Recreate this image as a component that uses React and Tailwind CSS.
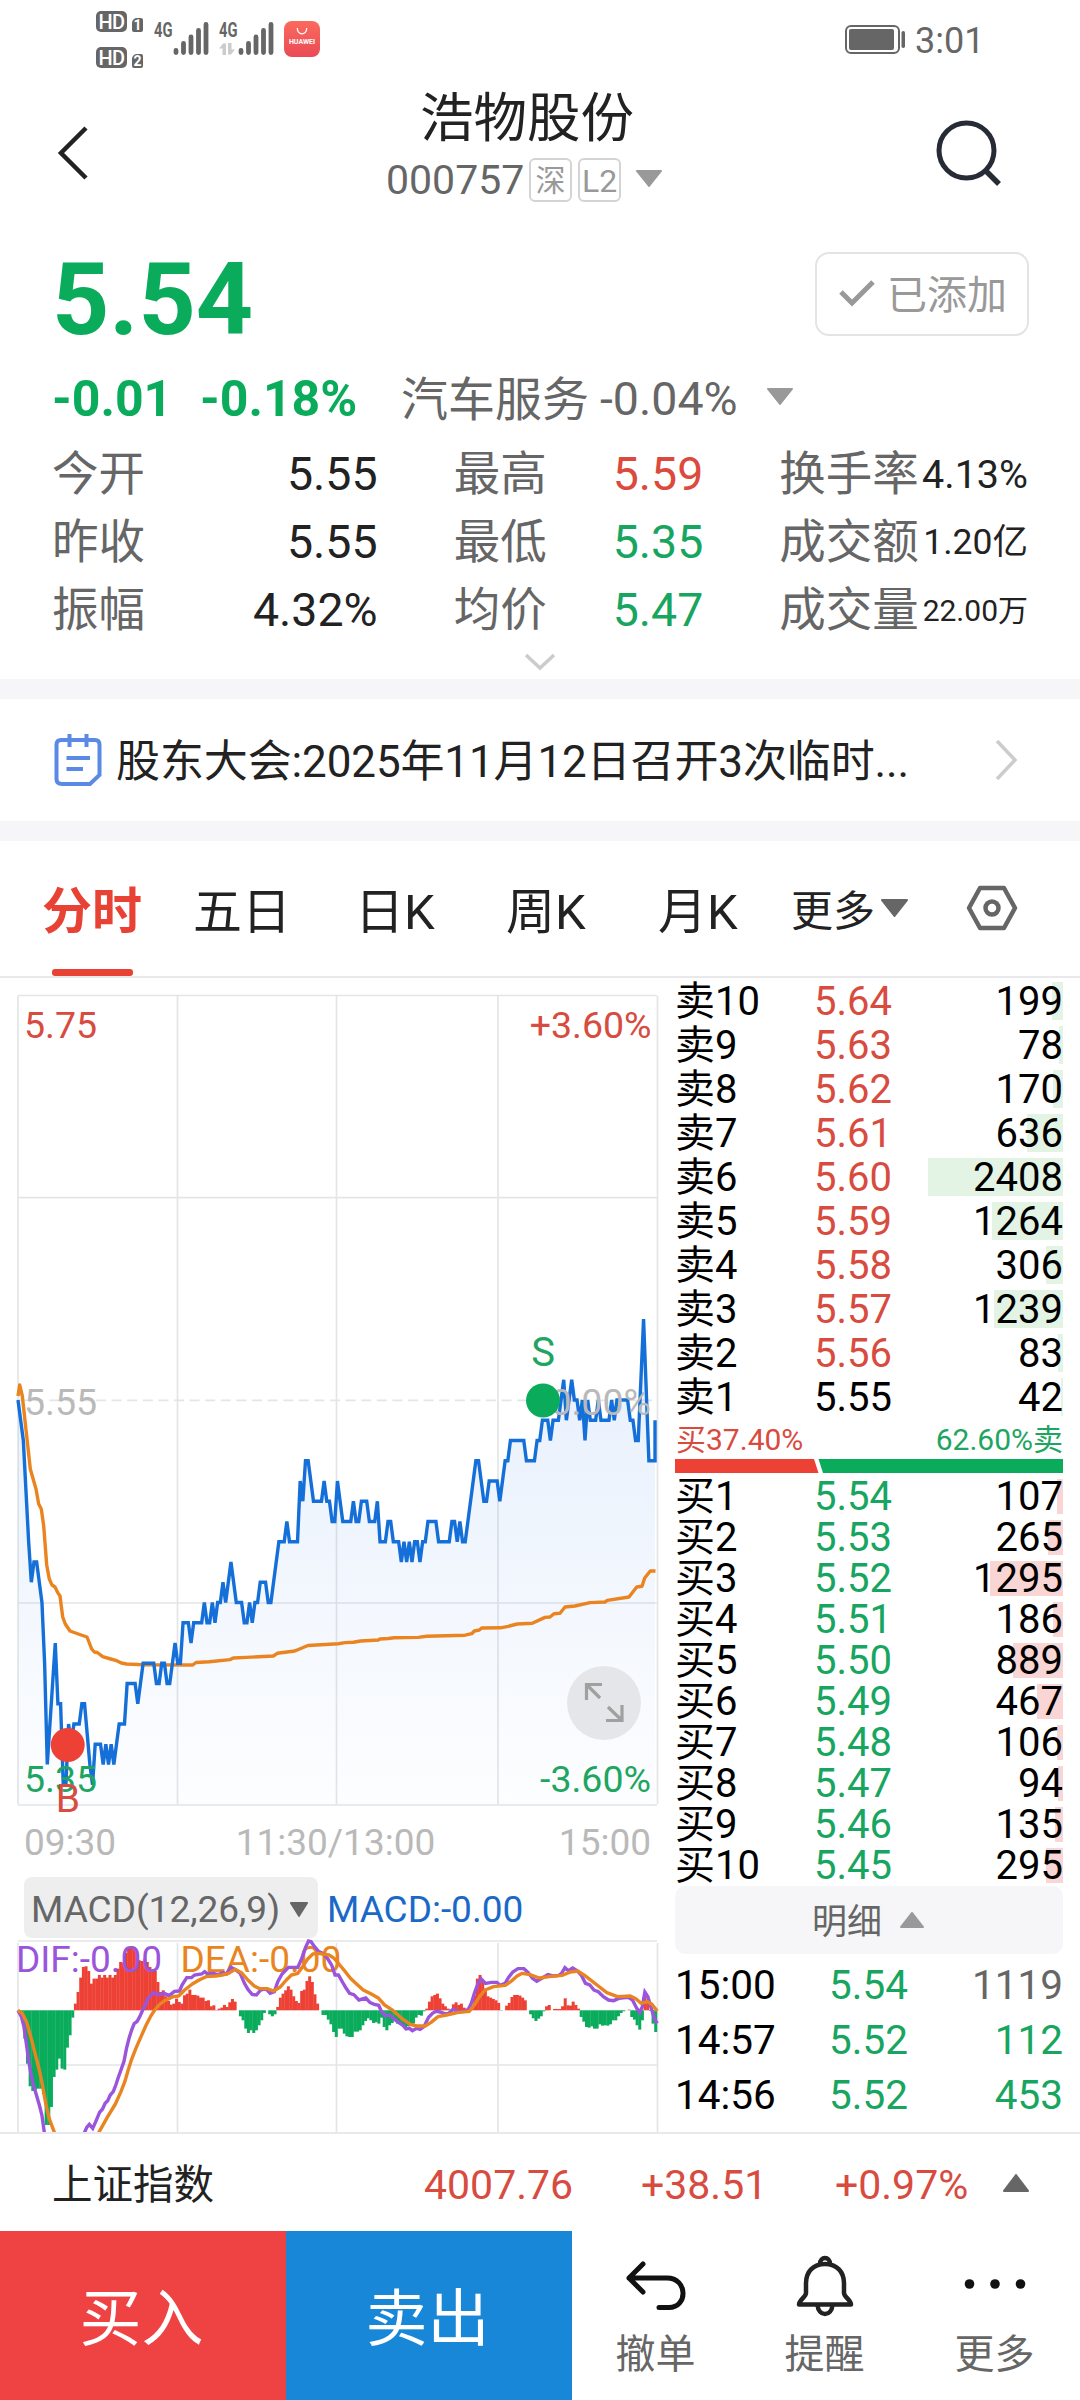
import React from 'react'

const stats = [
  [['今开', '5.55'], ['最高', '5.59', 'text-[#dc4a3d]'], ['换手率', '4.13%', 'text-[39.500px]']],
  [['昨收', '5.55'], ['最低', '5.35', 'text-[#17a55f]'], ['成交额', '1.20亿', 'text-[35.500px]']],
  [['振幅', '4.32%'], ['均价', '5.47', 'text-[#17a55f]'], ['成交量', '22.00万', 'text-[30px]']],
]

const asks = [
  ['卖10', '5.64', 199], ['卖9', '5.63', 78], ['卖8', '5.62', 170], ['卖7', '5.61', 636], ['卖6', '5.60', 2408],
  ['卖5', '5.59', 1264], ['卖4', '5.58', 306], ['卖3', '5.57', 1239], ['卖2', '5.56', 83], ['卖1', '5.55', 42],
]

const bids = [
  ['买1', '5.54', 107], ['买2', '5.53', 265], ['买3', '5.52', 1295], ['买4', '5.51', 186], ['买5', '5.50', 889],
  ['买6', '5.49', 467], ['买7', '5.48', 106], ['买8', '5.47', 94], ['买9', '5.46', 135], ['买10', '5.45', 295],
]

const ticks = [
  ['15:00', '5.54', 1119, 'text-[#666]'],
  ['14:57', '5.52', 112, 'text-[#17a55f]'],
  ['14:56', '5.52', 453, 'text-[#17a55f]'],
]

// [minute, cents below the previous close]
const prices = [
  [0, 0], [2, 2], [4, 7], [5, 9], [6, 8], [7, 8], [9, 10], [10, 13], [11, 18], [14, 12], [15, 15], [16, 15], [17, 19], [18, 19],
  [19, 16], [20, 17], [21, 16], [23, 16], [24, 15], [25, 15], [27, 18], [28, 19], [29, 17], [31, 17], [32, 18], [33, 17], [34, 18],
  [35, 17], [36, 18], [38, 16], [40, 16], [41, 14], [44, 14], [45, 15], [47, 13], [51, 13], [52, 14], [53, 14], [54, 13], [55, 13],
  [56, 14], [57, 14], [59, 12], [60, 13], [61, 13], [62, 11], [64, 11], [65, 12], [66, 11], [69, 11], [70, 10], [71, 11], [72, 11],
  [73, 10], [74, 11], [75, 10], [76, 10], [77, 9], [78, 10], [80, 8], [82, 10], [84, 10], [85, 11], [86, 11], [87, 10], [88, 11],
  [89, 10], [90, 10], [91, 9], [93, 9], [94, 10], [95, 10], [98, 7], [100, 7], [101, 6], [102, 7], [105, 7], [106, 4], [107, 5],
  [108, 3], [109, 3], [111, 5], [114, 5], [115, 4], [116, 5], [117, 5], [118, 6], [119, 6], [120, 4], [122, 6], [125, 6], [126, 5],
  [127, 6], [128, 6], [129, 5], [131, 5], [132, 6], [134, 6], [135, 5], [136, 7], [138, 7], [139, 6], [140, 6], [141, 7], [143, 7],
  [144, 8], [145, 7], [146, 8], [147, 7], [148, 8], [149, 7], [150, 7], [151, 8], [152, 7], [153, 7], [154, 6], [157, 6], [158, 7],
  [162, 7], [163, 6], [164, 6], [165, 7], [166, 6], [167, 7], [168, 7], [172, 3], [173, 3], [175, 5], [176, 5], [177, 4], [180, 4],
  [181, 5], [183, 3], [184, 3], [185, 2], [190, 2], [191, 3], [194, 3], [195, 2], [196, 2], [197, 1], [199, 1], [200, 2], [201, 1],
  [203, 1], [205, -1], [206, 1], [208, -1], [209, 0], [210, 0], [211, 1], [212, 0], [213, 2], [214, 0], [215, 1], [217, 1], [218, 0],
  [219, 1], [222, 1], [223, 0], [224, 1], [225, 0], [229, 0], [230, 1], [231, 1], [232, 2], [233, 2], [235, -4], [237, 3], [239.3, 3],
  [239.3, 1],
]

const avgLine =
  '18,1396 19.7,1385 22.3,1396 30.3,1469 36,1489 38.7,1504 41.3,1509 43.7,1526 46.7,1565 49.3,1579 52,1585 55,1587 57.7,1592.6 60,1596 62.7,1617 65.3,1624 70,1631 78.3,1634 87,1637 91.7,1649 94.3,1652 97.3,1652.5 102.7,1656.6 110.7,1659 116.7,1660.7 121.3,1663 126.7,1664 143.3,1664.8 192.7,1665 196,1662.5 209.3,1661.8 230,1659.6 233.3,1658 246.7,1657.4 273.3,1656 277.3,1653.3 294.7,1651 308,1645.5 338.3,1643.7 345,1642.6 353.3,1642.2 360.7,1641 378.3,1640 380,1639 388.3,1638.5 394,1637.8 418.3,1637.4 426.7,1636.3 465,1635.2 471.7,1633.7 474.3,1631 479.3,1630 481.7,1628 500.3,1627.8 508.3,1626.3 517.3,1624 532.3,1623.3 545,1617.4 550,1617 554,1613.7 560,1613.3 565,1607 575,1606 590,1602.6 605,1602 607.3,1600.4 629,1597 636.7,1587 642,1586.3 644.7,1578 650.3,1571 655.5,1571'

// one bar per minute, positive values hang under the zero line
const hist = [
  5, 20, 85, 160, 228, 242, 238, 235, 235, 252, 344, 344, 290, 200, 178, 145, 175, 178, 112, 75, 22,
  -20, -55, -98, -130, -132, -118, -80, -95, -95, -106, -98, -106, -98, -106, -98, -106, -125, -145, -143,
  -172, -190, -192, -190, -176, -150, -148, -155, -145, -130, -120, -118, -85, -55, -60, -42, -28, -17, -20, -35,
  -25, -20, -45, -50, -62, -46, -46, -44, -38, -38, -28, -30, -12, -15, -1, -5, -8, -16, -10, -24,
  -34, -26, 0, 18, 30, 55, 68, 60, 68, 60, 45, 30, 8, 0, 12, 18, 12, -10, -38, -50,
  -60, -72, -62, -42, -28, -22, -58, -62, -88, -102, -85, -48, -20, 0, 14, 14, 28, 42, 65, 80,
  55, 55, 70, 78, 80, 80, 64, 64, 60, 45, 32, 24, 30, 38, 36, 40, 22, 50, 60, 45,
  38, 28, 40, 42, 45, 52, 48, 45, 40, 22, 14, 16, 3, -5, -26, -42, -46, -50, -36, -20,
  -12, -5, -2, -18, -24, -16, -20, -8, -5, -8, -15, -45, -95, -106, -92, -65, -42, -38, -34, -30,
  -22, 1, 0, -14, -22, -40, -46, -46, -44, -38, -30, 0, 12, 24, 32, 25, 18, 3, -12, -16,
  0, -4, -4, -4, -12, -36, -15, -14, -26, -16, -5, 20, 34, 50, 52, 48, 55, 55, 42, 46,
  45, 46, 42, 30, 30, 18, 8, 3, 0, -2, 20, 28, 45, 58, 30, -40, -25, 2, 40, 65,
]

const dif = [
  [42, 481], [50, 500], [56, 530], [61, 575], [68, 640], [76, 695], [84, 730], [92, 765], [98, 795], [104, 850], [115, 960],
  [180, 960], [197, 850], [203, 832], [209, 823], [217, 835], [224, 815], [233, 787], [240, 777], [246, 760], [252, 752], [258, 735],
  [265, 725], [271, 705], [277, 682], [290, 635], [296, 595], [302, 565], [308, 540], [314, 521], [321, 514], [327, 500], [334, 480],
  [340, 465], [346, 445], [352, 437], [360, 428], [372, 434], [384, 430], [396, 437], [408, 424], [420, 423], [426, 405], [437, 383],
  [448, 383], [455, 375], [472, 372], [479, 365], [486, 372], [498, 370], [510, 374], [522, 368], [530, 372], [540, 352], [552, 360],
  [562, 370], [572, 400], [580, 418], [590, 433], [600, 435], [610, 420], [622, 416], [632, 430], [642, 425], [650, 395], [660, 372],
  [675, 352], [697, 352], [706, 325], [715, 292], [722, 273], [728, 275], [736, 290], [746, 305], [756, 310], [766, 325], [776, 345],
  [784, 375], [792, 375], [800, 393], [810, 415], [818, 430], [828, 434], [840, 450], [856, 444], [866, 458], [876, 463], [886, 466],
  [893, 485], [902, 497], [912, 495], [920, 505], [930, 515], [942, 525], [950, 537], [958, 535], [965, 542], [975, 535], [983, 538],
  [992, 530], [1003, 502], [1012, 490], [1020, 484], [1030, 486], [1040, 491], [1050, 490], [1060, 478], [1070, 484], [1085, 484],
  [1095, 480], [1103, 460], [1110, 430], [1118, 402], [1126, 387], [1136, 400], [1150, 397], [1163, 397], [1170, 406], [1182, 400],
  [1190, 382], [1200, 366], [1212, 356], [1226, 356], [1236, 368], [1246, 385], [1256, 394], [1268, 385], [1282, 374], [1294, 378],
  [1308, 376], [1314, 370], [1322, 353], [1330, 362], [1340, 354], [1350, 362], [1360, 375], [1370, 400], [1380, 405], [1390, 420],
  [1400, 425], [1412, 440], [1424, 450], [1436, 452], [1448, 445], [1470, 442], [1480, 450], [1490, 475], [1497, 487], [1503, 470],
  [1509, 426], [1516, 440], [1524, 475], [1531, 505], [1538, 520],
]

const dea = [
  [42, 481], [52, 490], [62, 515], [72, 560], [82, 610], [92, 660], [100, 710], [107, 760], [115, 805], [128, 850], [145, 960],
  [200, 960], [230, 850], [252, 800], [270, 762], [283, 725], [292, 695], [300, 660], [308, 628], [318, 595], [330, 560], [342, 525],
  [352, 500], [362, 480], [372, 465], [385, 452], [405, 440], [418, 438], [432, 420], [450, 402], [466, 390], [482, 380], [505, 378],
  [520, 375], [535, 370], [550, 358], [565, 368], [580, 390], [595, 408], [608, 416], [625, 416], [640, 423], [655, 412], [670, 390],
  [682, 375], [697, 370], [708, 350], [720, 327], [732, 312], [745, 310], [770, 315], [782, 325], [795, 345], [808, 365], [820, 385],
  [835, 403], [850, 420], [870, 433], [886, 445], [900, 465], [920, 482], [940, 505], [960, 523], [975, 528], [995, 528], [1008, 518],
  [1025, 500], [1045, 495], [1070, 488], [1098, 484], [1110, 465], [1122, 440], [1135, 420], [1155, 410], [1182, 406], [1195, 395],
  [1210, 378], [1222, 370], [1240, 374], [1262, 384], [1285, 380], [1315, 376], [1335, 366], [1352, 363], [1368, 376], [1380, 388],
  [1400, 408], [1420, 428], [1445, 440], [1475, 438], [1488, 446], [1500, 460], [1515, 455], [1525, 462], [1538, 483],
]

const gridX = [18, 177.5, 336.5, 498, 657.5]
const STEP = 2.662
const pricePoints = prices.map(([m, c]) => `${18 + m * STEP},${1400 + c * 20.25}`).join(' ')
const macdPoints = (data) => data.map(([x, y]) => `${x / 2.34},${1850 + y / 3}`).join(' ')

const Triangle = ({ up, className }) => (
  <svg viewBox="0 0 26 17" preserveAspectRatio="none" className={className} fill="currentColor">
    <path strokeLinejoin="round" stroke="currentColor" strokeWidth="2" d={up ? 'M13 1L25 16H1Z' : 'M13 16L1 1H25Z'} />
  </svg>
)

const Signal = () => (
  <svg className="h-[34px] w-[36px]" viewBox="0 0 36 34" stroke="#666" strokeWidth="4.800" strokeLinecap="round">
    <path d="M3 29.500V31.500M10.500 22.500V31.500M18 16V31.500M25.500 9.500V31.500M33 3.500V31.500" />
  </svg>
)

function HdBadge({ n }) {
  return (
    <div className="flex h-[21px] items-end gap-[5px] text-white">
      <span className="flex h-[21px] w-[31px] items-center justify-center rounded-[5px] bg-[#666] text-[20px] leading-none font-medium tracking-[-0.5px]">HD</span>
      <span className="flex h-[14px] w-[11px] items-center justify-center rounded-[2px] rounded-tl-[5px] bg-[#666] text-[14px] leading-none font-bold">{n}</span>
    </div>
  )
}

function StatusBar() {
  return (
    <div className="flex h-[78px] shrink-0 text-[#666]">
      <div className="ml-[96px] flex flex-col gap-[15px] pt-[11px]">
        <HdBadge n="1" />
        <HdBadge n="2" />
      </div>
      <div className="mt-[21px] ml-[11px] flex h-[34px]">
        <span className="w-[19px] origin-left scale-x-[0.7] text-[21px] leading-[18px] font-bold">4G</span>
        <Signal />
      </div>
      <div className="mt-[21px] ml-[10px] flex h-[34px]">
        <div className="flex w-[19px] flex-col justify-between">
          <span className="origin-left scale-x-[0.7] text-[21px] leading-[18px] font-bold">4G</span>
          <svg className="h-[12px] w-[16px]" viewBox="0 0 16 12" fill="#ccc">
            <path d="M0 5.500L4 0.500H7V12H3.500V5.500ZM9 0H12.500V6.500H16L12 11.500H9Z" />
          </svg>
        </div>
        <Signal />
      </div>
      <div className="mt-[21px] ml-[10px] flex h-[36px] w-[36px] flex-col items-center rounded-[8px] bg-linear-to-b from-[#fb6a5e] to-[#e94a55] pt-[7px] text-white">
        <svg className="h-[7px] w-[12px]" viewBox="0 0 14 8" fill="none" stroke="#fff" strokeWidth="1.500"><path d="M1.500 0C1.500 9 12.500 9 12.500 0" /></svg>
        <span className="mt-[4px] text-[7px] leading-none font-bold">HUAWEI</span>
      </div>
      <svg className="mt-[25px] ml-[525px] h-[29px] w-[61px]" viewBox="0 0 61 29">
        <rect x="1" y="1" width="53" height="27" rx="5" fill="none" stroke="#666" strokeWidth="2" />
        <rect x="4" y="4" width="45" height="21" rx="2" fill="#666" />
        <rect x="56.500" y="6" width="3.500" height="17" rx="1.700" fill="#666" />
      </svg>
      <span className="mt-[23px] ml-[9px] text-[36px] leading-[36px]">3:01</span>
    </div>
  )
}

function Header() {
  return (
    <div className="flex h-[152px] shrink-0">
      <div className="w-[386px] pt-[48px] pl-[57px]">
        <svg className="h-[54px] w-[32px]" viewBox="0 0 32 54" fill="none" stroke="#222" strokeWidth="4.500"><path d="M29 2L4 27L29 52" /></svg>
      </div>
      <div className="w-[278px] pt-[14px]">
        <h1 className="pl-[4px] text-center text-[53.500px] leading-[54px] whitespace-nowrap text-[#222]">浩物股份</h1>
        <div className="mt-[4px] flex h-[60px] items-center text-[41px] leading-none text-[#666]">
          <span className="w-[143px]">000757</span>
          <span className="flex h-[44px] w-[43px] items-center justify-center rounded-[6px] border-2 border-[#d4d4d4] pt-[2px] text-[30px] text-[#999]">深</span>
          <span className="ml-[6px] flex h-[44px] w-[43px] items-center justify-center rounded-[6px] border-2 border-[#d4d4d4] pt-[2px] text-[32px] text-[#999]">L2</span>
          <Triangle className="mb-[3px] ml-[15px] h-[17px] w-[26px] text-[#999]" />
        </div>
      </div>
      <svg className="mt-[41px] ml-[270px] h-[68px] w-[70px]" viewBox="0 0 70 68" fill="none" stroke="#272b36" strokeWidth="5">
        <circle cx="32.500" cy="31.500" r="27.500" />
        <path d="M51 51L65 65" strokeWidth="5.500" />
      </svg>
    </div>
  )
}

function Quote() {
  return (
    <div className="h-[449px] shrink-0 px-[52px] leading-none">
      <div className="flex h-[136px] items-center justify-between">
        <span className="pt-[3px] text-[100px] font-bold text-[#0aac5c]">5.54</span>
        <button className="mr-[-1px] mb-[8px] flex h-[84px] w-[214px] items-center rounded-[14px] border-2 border-[#e4e4e4] pl-[22px] text-[40px] leading-none text-[#999]">
          <svg className="mr-[12px] h-[28px] w-[36px]" viewBox="0 0 36 28" fill="none" stroke="#999" strokeWidth="5"><path d="M2 12L13 23L34 2" /></svg>
          <span className="pt-[3px]">已添加</span>
        </button>
      </div>
      <div className="flex h-[64px] items-center pt-[2px] text-[46px] text-[#666]">
        <span className="w-[148px] text-[50px] font-bold text-[#0aac5c]">-0.01</span>
        <span className="w-[201px] text-[50px] font-bold text-[#0aac5c]">-0.18%</span>
        <span className="w-[199px] text-[47px]">汽车服务</span>
        <span className="w-[167px] text-[46.500px]">-0.04%</span>
        <Triangle className="mb-[6px] h-[17px] w-[26px] text-[#999]" />
      </div>
      <div className="mt-[10px]">
        {stats.map(([a, b, c]) => (
          <div key={a[0]} className="flex h-[68px] items-center pt-px text-[46.500px] text-[#666]">
            <div className="flex w-[326px] justify-between"><span>{a[0]}</span><span className="text-[#222]">{a[1]}</span></div>
            <div className="ml-[76px] flex w-[326px]"><span className="w-[159px]">{b[0]}</span><span className={b[2]}>{b[1]}</span></div>
            <div className="flex w-[249px] items-center justify-between">
              <span>{c[0]}</span>
              <span className={`whitespace-nowrap text-[#222] ${c[2]}`}>{c[1]}</span>
            </div>
          </div>
        ))}
      </div>
      <svg className="mt-[9px] ml-[472px] h-[18px] w-[32px]" viewBox="0 0 32 18" fill="none" stroke="#ccc" strokeWidth="3.500"><path d="M2 2L16 15L30 2" /></svg>
    </div>
  )
}

function News() {
  return (
    <div className="h-[162px] shrink-0 border-y-[20px] border-[#f6f6f9]">
      <div className="flex h-full items-center text-[44px] leading-none text-[#222]">
        <svg className="ml-[54px] h-[54px] w-[48px]" viewBox="0 0 48 54" fill="none" stroke="#5a8ae6" strokeWidth="4">
          <path d="M7 7H41Q45.500 7 45.500 12V42L36 51H8Q2.500 51 2.500 46V12Q2.500 7 7 7Z" />
          <path d="M15.500 1V14M32.500 1V14M12.500 25H36M12.500 36H29" />
        </svg>
        <span className="ml-[14px] w-[800px] pt-[4px] tracking-[-0.12px] whitespace-nowrap">股东大会:2025年11月12日召开3次临时...</span>
        <svg className="ml-[79px] h-[42px] w-[24px]" viewBox="0 0 24 42" fill="none" stroke="#ccc" strokeWidth="3.500"><path d="M2 2L20 21L2 40" /></svg>
      </div>
    </div>
  )
}

function Tabs() {
  return (
    <div className="flex h-[137px] shrink-0 border-b-2 border-[#e9e9eb] text-[49px] leading-none whitespace-nowrap text-[#222]">
      <div className="ml-[41px] flex w-[102px] flex-col items-center justify-between text-[50px] font-bold text-[#e84234]">
        <span className="pt-[46px]">分时</span>
        <span className="h-[7px] w-[81px] rounded-[3px] bg-[#e84234]" />
      </div>
      <span className="ml-[50px] w-[98px] pt-[47px]">五日</span>
      <span className="ml-[64px] w-[80px] pt-[47px]">日K</span>
      <span className="ml-[71px] w-[80px] pt-[47px]">周K</span>
      <span className="ml-[72px] w-[80px] pt-[47px]">月K</span>
      <span className="ml-[53px] w-[84px] pt-[50px] text-[42px]">更多</span>
      <Triangle className="mt-[58px] ml-[6px] h-[18px] w-[27px] text-[#666]" />
      <svg className="mt-[44px] ml-[58px] h-[46px] w-[52px]" viewBox="0 0 52 46" fill="none" stroke="#666" strokeWidth="4.500" strokeLinejoin="round">
        <path d="M14 3H38L49 23L38 43H14L3 23Z" />
        <circle cx="26" cy="23" r="6.500" />
      </svg>
    </div>
  )
}

function PriceChart() {
  return (
    <svg className="block h-[838px] w-[672px]" viewBox="0 978 672 838" fontSize="37.500">
      <defs>
        <linearGradient id="fill" gradientUnits="userSpaceOnUse" x1="0" y1="1320" x2="0" y2="1805">
          <stop offset="0" stopColor="#1a6fe8" stopOpacity="0.11" />
          <stop offset="1" stopColor="#1a6fe8" stopOpacity="0.01" />
        </linearGradient>
      </defs>
      <g stroke="#e4e5e8" strokeWidth="1.700">
        {gridX.map((x) => <path key={x} d={`M${x} 996V1804`} />)}
        {[995.5, 1197.7, 1603, 1805].map((y) => <path key={y} d={`M18 ${y}H657`} />)}
        <path d="M18 1400.300H657" strokeDasharray="10 5.600" />
      </g>
      <polygon points={`18,1805 ${pricePoints} 655,1805`} fill="url(#fill)" />
      <polyline points={avgLine} fill="none" stroke="#ea8420" strokeWidth="3.400" strokeLinejoin="round" />
      <polyline points={pricePoints} fill="none" stroke="#156fd8" strokeWidth="3.400" />
      <text x="24" y="1038" fill="#d84b3f">5.75</text>
      <text x="651.500" y="1038" textAnchor="end" fill="#d84b3f">+3.60%</text>
      <text x="24" y="1415" fill="#b9b9b9">5.55</text>
      <text x="651" y="1415" textAnchor="end" fill="#b9b9b9">0.00%</text>
      <text x="24" y="1792" fill="#1fa562">5.35</text>
      <text x="651" y="1792" textAnchor="end" fill="#1fa562">-3.60%</text>
      <circle cx="543" cy="1400.500" r="17" fill="#0aac5c" />
      <text x="543" y="1365.500" textAnchor="middle" fontSize="40" fill="#1fa562">S</text>
      <circle cx="67.700" cy="1745" r="17" fill="#ee4135" />
      <text x="68" y="1811.500" textAnchor="middle" fontSize="39" fill="#d84b3f">B</text>
      <circle cx="604" cy="1703" r="37" fill="#e5e6ea" />
      <g fill="none" stroke="#a0a0a0" strokeWidth="3.200">
        <path d="M586.500 1700V1684.500H602M587 1685L600 1698" />
        <path d="M622 1705V1720.500H606M621.500 1720L608 1707" />
      </g>
    </svg>
  )
}

function MacdChart() {
  return (
    <svg className="block h-[194px] w-[672px]" viewBox="0 1938 672 194" fontSize="37">
      <g stroke="#e4e5e8" strokeWidth="1.700">
        {gridX.map((x) => <path key={x} d={`M${x} 1943V2132`} />)}
        <path d="M18 1941H657M18 2065H657" />
      </g>
      {hist.map((v, i) => (
        <rect key={i} x={18 + i * STEP} y={v < 0 ? 2010.3 + v / 3 : 2010.3} width="3" height={Math.abs(v) / 3} fill={v < 0 ? '#ee4135' : '#0aac5c'} />
      ))}
      <text x="16" y="1972" fill="#9a55dc">DIF:-0.00</text>
      <text x="180.500" y="1972" fill="#ea8420">DEA:-0.00</text>
      <polyline points={macdPoints(dif)} fill="none" stroke="#9a55dc" strokeWidth="3.400" />
      <polyline points={macdPoints(dea)} fill="none" stroke="#ea8420" strokeWidth="3.400" strokeLinejoin="round" />
    </svg>
  )
}

function ChartColumn() {
  return (
    <div className="w-[675px] shrink-0 leading-none">
      <PriceChart />
      <div className="flex h-[52px] w-[651px] items-center justify-between pl-[24px] text-[37px] text-[#b9b9b9]">
        <span>09:30</span><span className="mr-[4px]">11:30/13:00</span><span>15:00</span>
      </div>
      <div className="mt-[9px] flex h-[61px] items-center text-[37px]">
        <div className="ml-[24px] flex h-[61px] w-[294px] items-center rounded-[8px] bg-[#eeeeef] pt-[3px] pl-[7px] text-[#666]">
          MACD(12,26,9)
          <Triangle className="ml-[10px] h-[15px] w-[18px]" />
        </div>
        <span className="ml-[9px] pt-[3px] text-[#1a69c8]">MACD:-0.00</span>
      </div>
      <MacdChart />
    </div>
  )
}

function BookRow({ row, side }) {
  const [label, price, vol] = row
  const color = price === '5.55' ? 'text-black' : side === 'ask' ? 'text-[#d84b3f]' : 'text-[#17a55f]'
  return (
    <div className={`relative flex items-center ${side === 'ask' ? 'h-[44px] pt-[4px]' : 'h-[41px] pt-[2px]'}`}>
      <div
        className={`absolute right-0 ${side === 'ask' ? 'top-[4px] h-[38px] bg-[#e3f3e4]' : 'top-[4px] h-[35px] bg-[#f9d5d4]'}`}
        style={{ width: (vol / 2408) * 135 }}
      />
      <span className="relative w-[139px]">{label}</span>
      <span className={`relative ${color}`}>{price}</span>
      <span className="relative ml-auto">{vol}</span>
    </div>
  )
}

function OrderBook() {
  return (
    <div className="w-[388px] text-[40px] leading-none text-black">
      {asks.map((r) => <BookRow key={r[0]} row={r} side="ask" />)}
      <div className="flex h-[41px] items-center justify-between pt-[2px] text-[30px]">
        <span className="pl-px text-[#d84b3f]">买37.40%</span>
        <span className="text-[#1fa562]">62.60%卖</span>
      </div>
      <svg className="block h-[14px] w-[388px]" viewBox="0 0 388 14">
        <path d="M0 0H139L143.500 14H0Z" fill="#ee4135" />
        <path d="M143.500 0H388V14H148Z" fill="#0aac5c" />
      </svg>
      <div className="mt-[2px]">
        {bids.map((r) => <BookRow key={r[0]} row={r} side="bid" />)}
      </div>
      <div className="mt-px flex h-[68px] items-center justify-center rounded-[10px] bg-[#f6f6f9] pt-[4px] pr-[2px] text-[35px] text-[#666]">
        明细
        <Triangle up className="mb-[5px] ml-[18px] h-[16px] w-[24px] text-[#999]" />
      </div>
      <div className="pt-[4px] text-[40.500px]">
        {ticks.map(([time, price, vol, c]) => (
          <div key={time} className="flex h-[55px] items-center">
            <span className="w-[154px]">{time}</span>
            <span className="text-[#17a55f]">{price}</span>
            <span className={`ml-auto ${c}`}>{vol}</span>
          </div>
        ))}
      </div>
    </div>
  )
}

function IndexRow() {
  return (
    <div className="flex h-[99px] shrink-0 items-center border-t-2 border-[#e9e9eb] pt-[6px] text-[41px] leading-none text-[#d84b3f]">
      <span className="ml-[52px] w-[372px] text-[40.500px] text-[#222]">上证指数</span>
      <span className="w-[217px]">4007.76</span>
      <span className="w-[194px]">+38.51</span>
      <span className="w-[168px]">+0.97%</span>
      <Triangle up className="mb-[5px] h-[18px] w-[26px] text-[#666]" />
    </div>
  )
}

function BottomBar() {
  return (
    <div className="flex h-[169px] shrink-0 leading-none">
      <button className="w-[286px] bg-[#ee4243] pt-[9px] pr-[3px] text-[62px] text-white">买入</button>
      <button className="w-[286px] bg-[#1887d8] pt-[9px] pr-[3px] text-[62px] text-white">卖出</button>
      <div className="grid grow grid-cols-3 pr-[1px] text-[40px] text-[#666]">
        <div className="flex flex-col items-center pt-[22px] pr-[2px]">
          <svg className="h-[64px] w-[64px]" viewBox="0 0 64 64" fill="none" stroke="#111" strokeWidth="5" strokeLinecap="round" strokeLinejoin="round">
            <path d="M19 11L5 25L19 39M5 25H43C64 25 64 54.500 45 54.500H35" />
          </svg>
          <span className="mt-[18px]">撤单</span>
        </div>
        <div className="flex flex-col items-center pt-[22px] pr-[2px]">
          <svg className="h-[64px] w-[64px]" viewBox="0 0 64 64" fill="none" stroke="#222" strokeWidth="4.500" strokeLinejoin="round">
            <path d="M32 11C20 11 13 19 13 30V40C13 44 6 47 6 51.500H58C58 47 51 44 51 40V30C51 19 44 11 32 11Z" />
            <path d="M27 11C27 3 37 3 37 11M24.500 52C25.500 64 38.500 64 39.500 52" />
          </svg>
          <span className="mt-[18px]">提醒</span>
        </div>
        <div className="flex flex-col items-center pt-[22px]">
          <svg className="h-[64px] w-[64px]" viewBox="0 0 64 64" fill="#111">
            <circle cx="6.500" cy="31" r="4.800" /><circle cx="32" cy="31" r="4.800" /><circle cx="57.500" cy="31" r="4.800" />
          </svg>
          <span className="mt-[18px]">更多</span>
        </div>
      </div>
    </div>
  )
}

export default function App() {
  return (
    <div className="flex h-[2400px] w-[1080px] flex-col overflow-hidden bg-white font-[Roboto,'Noto_Sans_CJK_SC',sans-serif]">
      <StatusBar />
      <Header />
      <Quote />
      <News />
      <Tabs />
      <div className="flex h-[1154px] shrink-0">
        <ChartColumn />
        <OrderBook />
      </div>
      <IndexRow />
      <BottomBar />
    </div>
  )
}
